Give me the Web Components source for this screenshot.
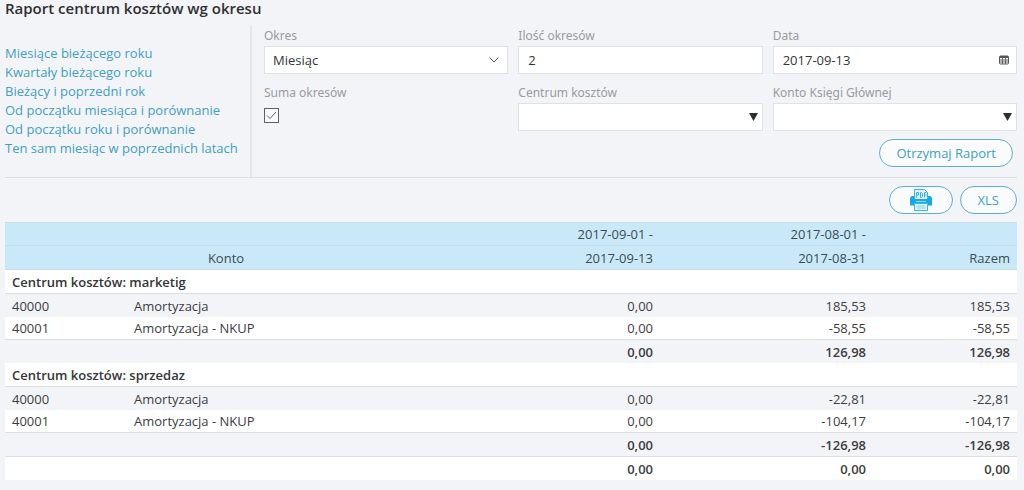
<!DOCTYPE html>
<html lang="pl">
<head>
<meta charset="utf-8">
<meta name="viewport" content="width=device-width, initial-scale=1">
<title>Raport centrum kosztów wg okresu</title>
<style>
  body { margin: 0; background: #f3f4f8; font: 13px/20px "Open Sans", "Noto Sans", sans-serif; color: #3c3d40; --accent: #429fc0; --line: #dddee2; }
</style>
</head>
<body>
<report-page heading="Raport centrum kosztów wg okresu">
  <quick-links slot="links">
    <a href="#months">Miesiące bieżącego roku</a>
    <a href="#quarters">Kwartały bieżącego roku</a>
    <a href="#years">Bieżący i poprzedni rok</a>
    <a href="#month-compare">Od początku miesiąca i porównanie</a>
    <a href="#year-compare">Od początku roku i porównanie</a>
    <a href="#same-month">Ten sam miesiąc w poprzednich latach</a>
  </quick-links>
  <report-field slot="fields" kind="select" label="Okres" value="Miesiąc"></report-field>
  <report-field slot="fields" kind="text" label="Ilość okresów" value="2"></report-field>
  <report-field slot="fields" kind="date" label="Data" value="2017-09-13"></report-field>
  <report-field slot="fields" kind="check" label="Suma okresów"></report-field>
  <report-field slot="fields" kind="combo" label="Centrum kosztów" value=""></report-field>
  <report-field slot="fields" kind="combo" label="Konto Księgi Głównej" value=""></report-field>
  <pill-button slot="submit">Otrzymaj Raport</pill-button>
  <pill-button slot="export" label="PDF" wide>
    <svg width="24" height="22" viewBox="0 0 24 22" aria-hidden="true">
      <path d="M2.500 7h19L23 9v7.500h-4V14H5v2.500H1V9z" fill="#17a9e6"/>
      <path d="M5.500 .5h10l3 3V11h-13z" fill="#e2f4fc" stroke="#35b3e8"/>
      <path d="M7.500 8.500V3.500h2v2.500h-2M11.500 3.500v5h1l1-1v-3l-1-1zM15.500 8.500v-5h2M15.500 6h2" fill="none" stroke="#35b3e8"/>
      <path d="M1 10h22v3H1z" fill="#17a9e6"/>
      <path d="M7 12.500h10" stroke="#9fdcf5"/>
      <path d="M5.500 14.500h13v7h-13z" fill="#e6f7fd" stroke="#35b3e8"/>
      <path d="M7.500 17h9M7.500 19h9" stroke="#7fcdee"/>
    </svg>
  </pill-button>
  <pill-button slot="export">XLS</pill-button>
  <cost-table slot="table"></cost-table>
</report-page>

<script>
const attach = (el, html) => { el.attachShadow({ mode: 'open' }).innerHTML = html; return el.shadowRoot; };

customElements.define('report-page', class extends HTMLElement {
  constructor() {
    super();
    attach(this, `
      <style>
        :host { display: block; padding: 0 7px 9px 5px; }
        h1 { margin: 0; font-size: 15px; line-height: 16px; font-weight: 600; color: #2f3033; }
        .filters { display: flex; margin-top: 9px; border-bottom: 1px solid #dddee3; }
        .links { flex: 0 0 247px; border-right: 2px solid #e6e7eb; padding-top: 19px; box-sizing: border-box; }
        .form { flex: 1; min-width: 0; padding: 1px 0 10px 12px; }
        .grid { display: grid; grid-template-columns: repeat(3, minmax(0, 1fr)); gap: 9px 10px; }
        .submit { display: flex; justify-content: flex-end; padding: 8px 4px 0 0; }
        .export { display: flex; justify-content: flex-end; gap: 7px; padding: 8px 0; }
      </style>
      <main>
        <h1>${this.getAttribute('heading') || ''}</h1>
        <section class="filters">
          <div class="links"><slot name="links"></slot></div>
          <div class="form">
            <div class="grid"><slot name="fields"></slot></div>
            <div class="submit"><slot name="submit"></slot></div>
          </div>
        </section>
        <div class="export"><slot name="export"></slot></div>
        <slot name="table"></slot>
      </main>`);
  }
});

customElements.define('quick-links', class extends HTMLElement {
  constructor() {
    super();
    attach(this, `
      <style>
        :host { display: flex; flex-direction: column; align-items: flex-start; }
        ::slotted(a) { color: var(--accent); text-decoration: none; line-height: 19px; white-space: nowrap; }
      </style>
      <slot></slot>`);
  }
});

customElements.define('report-field', class extends HTMLElement {
  constructor() {
    super();
    const label = this.getAttribute('label');
    const value = this.getAttribute('value') || '';
    const kind = this.getAttribute('kind');
    const select = `<select id="c"><option>${value}</option></select>`;
    const controls = {
      text: `<input id="c" type="text" value="${value}">`,
      select: select + `<svg class="mark chevron" width="12" height="8" viewBox="0 0 12 8"><path d="M1.500 1.500 6 6l4.500-4.500" fill="none" stroke="#55565a"/></svg>`,
      combo: select + `<svg class="mark" width="9" height="8" viewBox="0 0 9 8"><path d="M0 0h9L4.500 8z" fill="#2d2e31"/></svg>`,
      date: `<input id="c" type="text" value="${value}"><button class="mark" type="button" aria-label="Kalendarz">
        <svg width="10" height="10" viewBox="0 0 10 10"><rect x=".5" y="1" width="9" height="8" rx="1" fill="#fff" stroke="#55565a"/><path d="M1 1h8v2H1z" fill="#55565a"/><path d="M1 5h8M1 7h8M3.500 3v6M6.500 3v6" stroke="#66676b"/></svg></button>`,
      check: `<input id="c" type="checkbox" checked><svg class="tick" width="15" height="15" viewBox="0 0 15 15"><path d="M3 7.500 6 10.500 12 4" fill="none" stroke="#606165"/></svg>`
    };
    attach(this, `
      <style>
        :host { display: block; min-width: 0; }
        label { display: block; font-family: "Noto Sans", sans-serif; font-size: 12px; line-height: 20px; color: #9a9ba0; }
        .box { position: relative; height: 28px; }
        input, select { box-sizing: border-box; display: block; width: 100%; height: 28px; margin: 0; padding: 0 8px; border: 1px solid #e0e1e5; border-radius: 0; background: #fff; color: #343538; font: inherit; appearance: none; }
        input[type=text] { padding-left: 9px; }
        .mark { position: absolute; right: 5px; top: 10px; pointer-events: none; }
        .chevron { right: 8px; }
        button.mark { right: 8px; top: 9px; padding: 0; border: 0; background: none; pointer-events: auto; line-height: 0; }
        .check { padding-top: 5px; box-sizing: border-box; }
        input[type=checkbox] { width: 15px; height: 15px; padding: 0; border-color: #606165; background: #f8f9fb; }
        .tick { position: absolute; left: 0; top: 5px; pointer-events: none; }
      </style>
      <label for="c">${label}</label>
      <div class="box ${kind}">${controls[kind]}</div>`);
  }
});

customElements.define('pill-button', class extends HTMLElement {
  constructor() {
    super();
    const label = this.getAttribute('label');
    attach(this, `
      <style>
        :host { display: block; }
        button { display: flex; align-items: center; justify-content: center; height: 28px; padding: 0 16px; border: 1px solid #62aec9; border-radius: 14px; background: #f9fbfd; color: var(--accent); font: inherit; cursor: pointer; }
        :host([slot=export]) button { padding: 0 17px; }
        :host([wide]) button { padding: 0 19px; }
      </style>
      <button type="button"${label ? ` aria-label="${label}"` : ''}><slot></slot></button>`);
  }
});

customElements.define('cost-table', class extends HTMLElement {
  constructor() {
    super();
    const groups = [
      { name: 'marketig', rows: [['40000', 'Amortyzacja', '0,00', '185,53', '185,53'], ['40001', 'Amortyzacja - NKUP', '0,00', '-58,55', '-58,55']], sum: ['0,00', '126,98', '126,98'] },
      { name: 'sprzedaz', rows: [['40000', 'Amortyzacja', '0,00', '-22,81', '-22,81'], ['40001', 'Amortyzacja - NKUP', '0,00', '-104,17', '-104,17']], sum: ['0,00', '-126,98', '-126,98'] }
    ];
    const cells = list => list.map(v => `<td>${v}</td>`).join('');
    const body = groups.map(g => `
      <tbody>
        <tr class="group"><th colspan="5" scope="rowgroup">Centrum kosztów: ${g.name}</th></tr>
        ${g.rows.map(r => `<tr>${cells(r)}</tr>`).join('')}
        <tr class="sum"><td colspan="2"></td>${cells(g.sum)}</tr>
      </tbody>`).join('');
    attach(this, `
      <style>
        :host { display: block; }
        table { width: 100%; table-layout: fixed; border-collapse: separate; border-spacing: 0; }
        .code { width: 122px; } .period { width: 213px; } .total { width: 144px; }
        th, td { box-sizing: border-box; height: 23px; padding: 0 7px; line-height: 22px; text-align: right; font-weight: 400; white-space: nowrap; }
        td:nth-child(-n+2):not([colspan] ~ td), .group th { text-align: left; }
        thead th { height: 24px; background: #c9e9f9; color: #3d4b54; border-bottom: 1px solid #c3dde9; }
        thead tr:first-child th { border-top: 1px solid #c3dde9; }
        thead .account { text-align: center; }
        .group { background: #fff; }
        .group th { height: 24px; font-weight: 600; color: #343538; border-bottom: 1px solid var(--line); }
        tbody tr:nth-child(3) { background: #fff; }
        tbody tr:nth-child(3) td { border-bottom: 1px solid var(--line); }
        .sum td, tfoot td { font-weight: 600; }
        tbody:last-of-type .sum td { height: 24px; border-bottom: 1px solid var(--line); }
        tfoot { background: #fff; }
      </style>
      <table>
        <colgroup><col class="code"><col><col class="period"><col class="period"><col class="total"></colgroup>
        <thead>
          <tr><th colspan="2"></th><th>2017-09-01 -</th><th>2017-08-01 -</th><th></th></tr>
          <tr><th colspan="2" class="account">Konto</th><th>2017-09-13</th><th>2017-08-31</th><th>Razem</th></tr>
        </thead>
        ${body}
        <tfoot><tr><td colspan="2"></td>${cells(['0,00', '0,00', '0,00'])}</tr></tfoot>
      </table>`);
  }
});
</script>
</body>
</html>
